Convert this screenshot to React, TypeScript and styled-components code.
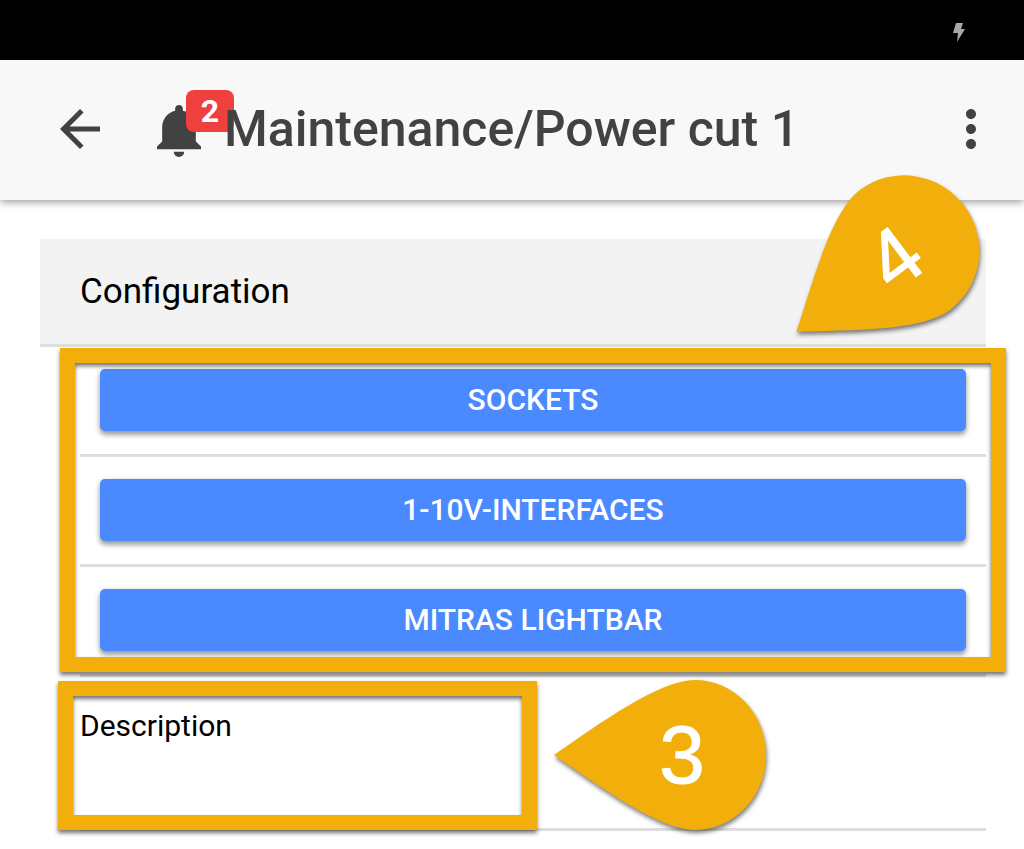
import React from "react";
import styled, { createGlobalStyle } from "styled-components";

const AMBER = "#f2ae0b";
const INK = "#424242";
const LINE = "#dedede";

const GlobalStyle = createGlobalStyle`
  *, *::before, *::after { box-sizing: border-box; }
  body {
    margin: 0;
    background: #ffffff;
    color: #000000;
    font-family: Roboto, "Liberation Sans", sans-serif;
  }
`;

const Page = styled.div`
  overflow: hidden;
`;

const StatusBar = styled.div`
  display: flex;
  justify-content: flex-end;
  align-items: center;
  height: 60px;
  padding: 4px 58px 0 0;
  background: #000000;
`;

const Toolbar = styled.header`
  display: flex;
  align-items: center;
  height: 140px;
  padding: 0 23px 2px 50px;
  background: #f8f8f8;
  box-shadow: 0 2px 8px rgba(0, 0, 0, 0.4);
`;

const IconButton = styled.button<{ $size: number }>`
  position: relative;
  display: block;
  flex: none;
  width: ${(p) => p.$size}px;
  height: ${(p) => p.$size}px;
  padding: 0;
  border: 0;
  background: none;
  color: ${INK};
  cursor: pointer;

  & > svg {
    display: block;
    width: 100%;
    height: 100%;
    fill: currentColor;
  }
`;

const Alerts = styled.div`
  margin: 4px 13px 0 37px;
`;

const Badge = styled.span`
  position: absolute;
  top: -9px;
  left: 39px;
  width: 48px;
  height: 42px;
  border-radius: 8px;
  background: #ef3f3f;
  color: #ffffff;
  font-family: Roboto, "Liberation Sans", sans-serif;
  font-size: 32px;
  font-weight: 700;
  line-height: 42px;
  text-align: center;
`;

const Title = styled.h1`
  position: relative;
  flex: 1;
  min-width: 0;
  margin: 0;
  color: ${INK};
  font-size: 50px;
  font-weight: 500;
  line-height: 60px;
  white-space: nowrap;
`;

const Content = styled.main`
  padding: 39px 38px 16px 40px;
`;

const SectionHeader = styled.div`
  position: relative;
  height: 108px;
  padding: 0 40px;
  border-bottom: 3px solid ${LINE};
  background: #f3f3f3;
`;

const SectionTitle = styled.h2`
  margin: 0;
  font-size: 35px;
  font-weight: 400;
  line-height: 105px;
`;

const ButtonList = styled.ul`
  position: relative;
  margin: 0;
  padding: 0 0 0 40px;
  list-style: none;
`;

const ButtonRow = styled.li`
  padding: 22px 20px 23px;
  border-bottom: 3px solid ${LINE};
`;

const ActionButton = styled.button`
  display: block;
  width: 100%;
  height: 62px;
  padding: 0;
  border: 0;
  border-radius: 5px;
  background: #4b89ff;
  box-shadow: 0 4px 5px rgba(0, 0, 0, 0.32), 0 1px 6px rgba(0, 0, 0, 0.16);
  color: #ffffff;
  font-family: Roboto, "Liberation Sans", sans-serif;
  font-size: 30px;
  font-weight: 500;
  line-height: 62px;
  text-transform: uppercase;
  cursor: pointer;
`;

const Field = styled.div`
  position: relative;
  display: flex;
  flex-direction: column;
  height: 154px;
  margin-left: 40px;
  padding-top: 30px;
  border-bottom: 3px solid ${LINE};
`;

const FieldLabel = styled.label`
  font-size: 30px;
  line-height: 38px;
`;

const FieldInput = styled.textarea`
  width: 46%;
  height: 60px;
  padding: 0;
  border: 0;
  outline: 0;
  resize: none;
  background: transparent;
  font-family: Roboto, "Liberation Sans", sans-serif;
  font-size: 30px;
`;

const Frame = styled.div`
  position: absolute;
  border: 15px solid ${AMBER};
  filter: drop-shadow(0 3px 2px rgba(0, 0, 0, 0.55));
  pointer-events: none;
`;

const ListFrame = styled(Frame)`
  top: 1px;
  right: -20px;
  bottom: 5px;
  left: 20px;
`;

const FieldFrame = styled(Frame)`
  top: 4px;
  bottom: -2px;
  left: -22px;
  width: 479px;
`;

const Pin = styled.svg`
  position: absolute;
  z-index: 2;
  overflow: visible;
  filter: drop-shadow(1px 3px 2px rgba(0, 0, 0, 0.5));
  pointer-events: none;

  & text {
    fill: #ffffff;
    stroke: #ffffff;
    stroke-width: 1px;
    font-family: "Liberation Sans", Arial, sans-serif;
    font-size: 82px;
    text-anchor: middle;
  }
`;

const HeaderPin = styled(Pin)`
  top: -64px;
  right: 7px;
`;

const FieldPin = styled(Pin)`
  top: 3px;
  left: 474px;
`;

interface CalloutProps {
  as: typeof HeaderPin;
  label: string;
  tip: number;
  reach: number;
  angle?: number;
}

/* A teardrop whose point lies `tip` pixels left of the round end's centre. */
function Callout({ as: Shape, label, tip, reach, angle = 0 }: CalloutProps) {
  const r = 75;
  return (
    <Shape width={tip + reach} height={r * 2} viewBox={`0 0 ${tip + reach} ${r * 2}`}>
      <g transform={`rotate(${angle} ${tip} ${r})`}>
        <path
          fill={AMBER}
          d={`M0 ${r}C45 44 ${tip - 36} 0 ${tip} 0A${reach} ${r} 0 0 1 ${tip} ${r * 2}C${tip - 36} ${r * 2} 45 106 0 ${r}Z`}
        />
        <text x={tip - 13} y={r + 28}>{label}</text>
      </g>
    </Shape>
  );
}

const actions = ["Sockets", "1-10V-Interfaces", "Mitras Lightbar"];

export default function App() {
  return (
    <Page>
      <GlobalStyle />
      <StatusBar>
        <svg width="14" height="20" viewBox="0 0 14 20" fill="#a8a8a8" aria-hidden="true">
          <path d="M4 1h7L9 7h4L5 20l1-9H1Z" />
        </svg>
      </StatusBar>
      <Toolbar>
        <IconButton $size={60} aria-label="Back">
          <svg viewBox="0 0 24 24">
            <path d="M20 11H7.83l5.59-5.59L12 4l-8 8 8 8 1.41-1.41L7.83 13H20v-2z" />
          </svg>
        </IconButton>
        <Alerts>
          <IconButton $size={64} aria-label="Notifications">
            <svg viewBox="0 0 512 512">
              <path d="M256 464c22.779 0 41.411-18.719 41.411-41.6h-82.823c0 22.881 18.633 41.6 41.412 41.6zm134.589-124.8V224.8c0-63.44-44.516-117.518-103.53-131.041V79.2c0-17.682-13.457-31.2-31.059-31.2s-31.059 13.518-31.059 31.2v14.559c-59.015 13.523-103.53 67.601-103.53 131.041v114.4L80 380.8v20.8h352v-20.8l-41.411-41.6z" />
            </svg>
            <Badge>2</Badge>
          </IconButton>
        </Alerts>
        <Title>Maintenance/Power cut 1</Title>
        <IconButton $size={60} aria-label="More options">
          <svg viewBox="0 0 24 24">
            <path d="M12 8c1.1 0 2-.9 2-2s-.9-2-2-2-2 .9-2 2 .9 2 2 2zm0 2c-1.1 0-2 .9-2 2s.9 2 2 2 2-.9 2-2-.9-2-2-2zm0 6c-1.1 0-2 .9-2 2s.9 2 2 2 2-.9 2-2-.9-2-2-2z" />
          </svg>
        </IconButton>
      </Toolbar>
      <Content>
        <SectionHeader>
          <SectionTitle>Configuration</SectionTitle>
          <Callout as={HeaderPin} label="4" tip={136} reach={74} angle={-37} />
        </SectionHeader>
        <ButtonList>
          {actions.map((name) => (
            <ButtonRow key={name}>
              <ActionButton>{name}</ActionButton>
            </ButtonRow>
          ))}
          <ListFrame />
        </ButtonList>
        <Field>
          <FieldLabel htmlFor="description">Description</FieldLabel>
          <FieldInput id="description" />
          <FieldFrame />
          <Callout as={FieldPin} label="3" tip={141} reach={71} />
        </Field>
      </Content>
    </Page>
  );
}
